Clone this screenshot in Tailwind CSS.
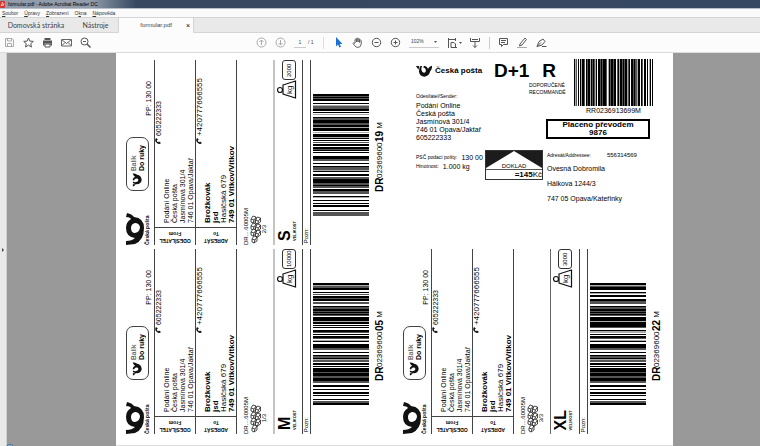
<!DOCTYPE html>
<html lang="cs">
<head>
    <meta charset="UTF-8">
    <meta name="viewport" content="width=device-width, initial-scale=1.0">
    <title>formular.pdf - Adobe Acrobat Reader DC</title>
    <script src="https://cdn.jsdelivr.net/npm/@tailwindcss/browser@4"></script>
</head>
<body class="bg-[#999999] text-black min-h-screen flex flex-col font-['Liberation_Sans',Arial,sans-serif]">

    <!-- shared symbols -->
    <svg class="hidden">
        <symbol id="horn" viewBox="0 0 44 33">
            <path d="M0 3 L9 3 Q7 8 8 13 Q3 10 0 3Z" fill="#111"/>
            <path fill-rule="evenodd" d="M12 3 L17 3 Q14 8 15 14 Q17 22 23 21 Q28 20 27 13 Q26 8 20 7 L22 2 Q31 3 33 10 Q37 4 44 2 Q45 11 39 17 Q37 30 23 32 Q10 31 8 18 Q8 9 12 3Z" fill="#111"/>
        </symbol>
        <symbol id="horn-up" viewBox="0 0 18 32">
            <path fill-rule="evenodd" d="M1 0 Q6 1 8 4 Q18 5 18 15 Q18 27 9 31 L0 32 V28 Q6 28 9 25 Q0 24 0 15 Q0 9 5 6 Q4 4 0 4Z M5 15 Q5 20 9 20 Q14 19 14 14 Q13 10 9 10 Q5 11 5 15Z" fill="#111"/>
        </symbol>
        <symbol id="phone" viewBox="0 0 6 6">
            <path d="M1 0 Q-1 3 2 5 Q4 7 6 5 L4 3.500 L3.200 4.300 Q1.500 3.500 2 2 L3 1.500Z" fill="#111"/>
        </symbol>
        <symbol id="boxes" viewBox="0 0 11 29">
            <g fill="#fff" stroke="#222" stroke-width=".8">
                <path id="cube" d="M1 4 L3 1 L6 2 L6 6 L3 8 L1 7Z M1 4 L4 5 L6 2 M4 5 L3 8"/>
                <use href="#cube" x="4.500" y="1"/>
                <use href="#cube" y="7"/>
                <use href="#cube" x="4.500" y="8"/>
                <use href="#cube" y="13"/>
                <use href="#cube" x="4.500" y="14"/>
                <use href="#cube" x="1" y="20"/>
            </g>
        </symbol>
    </svg>

    <header>
        <div class="h-2 flex items-center gap-[3px] overflow-hidden bg-linear-to-r from-[#929cab] from-12% via-[#35485f] via-18% to-[#354961]">
            <svg class="w-[5px] h-[7px]" viewBox="0 0 5 7"><rect width="5" height="7" rx="1" fill="#d8352c"/><path d="M1 5 L2.500 1.500 L4 4 L1 4.500" fill="none" stroke="#fff" stroke-width=".7"/></svg>
            <h1 class="text-[5px] leading-[7px] whitespace-nowrap">formular.pdf - Adobe Acrobat Reader DC</h1>
        </div>
        <nav class="h-[10px] px-[2px] flex items-center gap-[6px] bg-[#fafafa] border-t border-b border-t-[#b8c0c9] border-b-[#d5d5d5] text-[5px] leading-[7px] text-[#333]">
            <a href="#"><u>S</u>oubor</a>
            <a href="#"><u>Ú</u>pravy</a>
            <a href="#"><u>Z</u>obrazení</a>
            <a href="#">O<u>k</u>na</a>
            <a href="#"><u>N</u>ápověda</a>
        </nav>
        <div class="h-[15px] flex bg-[#e9e9e9] border-b border-[#d5d5d5] text-[7px] leading-[15px] text-[#444] font-['Lato',sans-serif]">
            <button class="w-[72px]">Domovská stránka</button>
            <button class="w-[46px] pl-[1px]">Nástroje</button>
            <div class="w-[76px] h-[15px] flex justify-end gap-[14px] pr-[3px] bg-[#fcfcfc] border-l border-r border-[#d5d5d5] font-['Liberation_Sans',Arial,sans-serif] text-[6px]">
                <span>formular.pdf</span>
                <button aria-label="Zavřít" class="text-[7px] text-black">×</button>
            </div>
        </div>
        <div class="h-5 flex items-center bg-[#fcfcfc] border-b border-[#dcdcdc] text-[5px] text-[#444]">
            <div class="flex items-center gap-2 pl-1">
                <button aria-label="Uložit"><svg class="size-[11px]" viewBox="0 0 11 11" fill="none" stroke="#aaa"><path d="M1.500 1.500H8L9.500 3V9.500H1.500Z M3.500 1.500V4H7.500V1.500 M3.500 9.500V6.500H7.500V9.500"/></svg></button>
                <button aria-label="Oblíbené"><svg class="size-[11px]" viewBox="0 0 11 11" fill="none" stroke="#555"><path d="M5.500 1 L6.900 4.100 L10.300 4.400 L7.700 6.700 L8.500 10 L5.500 8.200 L2.500 10 L3.300 6.700 L.700 4.400 L4.100 4.100Z"/></svg></button>
                <button aria-label="Tisk"><svg class="size-[11px]" viewBox="0 0 11 11"><path d="M2.500 1H8.500V3H2.500Z M1 3.500H10V8.500H8.500V6.500H2.500V8.500H1Z" fill="#555"/><path d="M3 7V10H8V7Z" fill="#fff" stroke="#555"/></svg></button>
                <button aria-label="E-mail"><svg class="size-[11px]" viewBox="0 0 11 11" fill="none" stroke="#666"><path d="M.500 2.500H10.500V9H.500Z M1 3L5.500 6.500L10 3 M1 8.500L4 5.500 M10 8.500L7 5.500"/></svg></button>
                <button aria-label="Najít"><svg class="size-[11px]" viewBox="0 0 11 11" fill="none" stroke="#555"><circle cx="4.500" cy="4.500" r="3.500"/><path d="M7 7L10.500 10.500" stroke-width="1.500"/><path d="M3 4.500H6"/></svg></button>
            </div>
            <div class="flex items-center ml-[165px]">
                <div class="w-[67px] flex items-center gap-2">
                    <button aria-label="Předchozí"><svg class="size-[11px]" viewBox="0 0 11 11" fill="none" stroke="#aaa"><circle cx="5.500" cy="5.500" r="4.500"/><path d="M5.500 8V3 M3.500 5L5.500 3L7.500 5"/></svg></button>
                    <button aria-label="Další"><svg class="size-[11px]" viewBox="0 0 11 11" fill="none" stroke="#aaa"><circle cx="5.500" cy="5.500" r="4.500"/><path d="M5.500 3V8 M3.500 6L5.500 8L7.500 6"/></svg></button>
                    <label class="flex items-center gap-[2px]"><input aria-label="Strana" value="1" class="w-3 h-[11px] text-center border-b border-[#ccc]"><span class="whitespace-nowrap">/ 1</span></label>
                </div>
                <div class="w-[166px] h-3 pl-[9px] flex items-center gap-2 border-l border-[#ddd]">
                    <button aria-label="Výběr"><svg class="size-[11px]" viewBox="0 0 11 11"><path d="M3 0V9.500L5 7.500L6.500 10.500L8 9.800L6.600 7H9.500Z" fill="#1a6fd0"/></svg></button>
                    <button aria-label="Ruka"><svg class="size-[11px]" viewBox="0 0 11 11" fill="none" stroke="#555" stroke-width=".9"><path d="M3 6V2.500Q3.700 1.500 4.400 2.500V5V1.500Q5.200 .500 6 1.500V5V2Q6.800 1.200 7.600 2V5.500V3.500Q8.500 2.500 9.200 3.500V7Q9 10.300 6 10.400Q4 10.400 3 9L1 6.500Q1 5 3 6.500"/></svg></button>
                    <button aria-label="Zmenšit"><svg class="size-[11px]" viewBox="0 0 11 11" fill="none" stroke="#555"><circle cx="5.500" cy="5.500" r="4.200"/><path d="M3.500 5.500H7.500"/></svg></button>
                    <button aria-label="Zvětšit"><svg class="size-[11px]" viewBox="0 0 11 11" fill="none" stroke="#555"><circle cx="5.500" cy="5.500" r="4.200"/><path d="M3.500 5.500H7.500M5.500 3.500V7.500"/></svg></button>
                    <div class="w-[30px] h-[11px] flex items-center justify-between px-[2px] border-b border-[#ccc]">
                        <select aria-label="Lupa" class="appearance-none w-5"><option>102%</option></select>
                        <svg class="w-[3px] h-[2px]" viewBox="0 0 3 2"><path d="M0 0H3L1.500 2Z" fill="#555"/></svg>
                    </div>
                    <button aria-label="Přizpůsobit" class="flex items-center gap-[2px]"><svg class="size-[10px]" viewBox="0 0 10 10" fill="none" stroke="#555"><path d="M1.500 0V10 M1.500 1.500H8 M8.500 0V3 M4 9.500V4.500H7L8.500 6V9.500 M4 9.500H10"/></svg><svg class="w-[3px] h-[2px]" viewBox="0 0 3 2"><path d="M0 0H3L1.500 2Z" fill="#555"/></svg></button>
                    <button aria-label="Posun"><svg class="size-[10px]" viewBox="0 0 10 10" fill="none" stroke="#555"><path d="M.500 0V3.500H9.500V0 M2 1.500H8 M5 4V9.500 M3 7.500L5 9.500L7 7.500"/></svg></button>
                </div>
                <div class="h-3 pl-2 flex items-center gap-2 border-l border-[#ccc]">
                    <button aria-label="Komentář"><svg class="size-[11px]" viewBox="0 0 11 11" fill="none" stroke="#555"><path d="M1.500 1.500H9.500V7.500H5.500L3.500 9.500V7.500H1.500Z M3 3.500H8 M3 5.500H7"/></svg></button>
                    <button aria-label="Zvýraznit"><svg class="size-[11px]" viewBox="0 0 11 11" fill="none" stroke="#555"><path d="M3 7L8 1L9.500 2.500L5 8L2.500 9Z"/><path d="M0 10.500H10" stroke="#aaa"/></svg></button>
                    <button aria-label="Podepsat"><svg class="size-[11px]" viewBox="0 0 11 11" fill="none" stroke="#555"><path d="M1 9.500L3 4.500L7 2L9 4.500L6 8Z M1 9.500L5 5.500 M6 9.500H10.500"/></svg></button>
                </div>
            </div>
        </div>
    </header>

    <div class="flex-1 flex relative overflow-hidden">
        <aside class="w-[7px] bg-[#e9e9e9] border-r border-[#d0d0d0] flex items-center">
            <button aria-label="Panel" class="ml-[2px]"><svg class="w-[2px] h-1" viewBox="0 0 2 4"><path d="M0 0L2 2L0 4Z" fill="#444"/></svg></button>
        </aside>
        <div class="absolute left-[5px] -bottom-[8px] size-[10px] rounded-full bg-[#8fb4d6] border border-[#4a6f94]"></div>

        <main class="flex-1 flex justify-center pl-[22px]">
            <article class="w-[557px] shrink-0 bg-white pt-[7px] pb-[11px] pl-[10px] border-b border-[#ddd] grid grid-cols-[277px_1fr] gap-y-1 content-start">
                <section id="label1" class="h-[185px] flex"></section>

                <section class="pl-[13px] pr-5 flex text-[7px] leading-[8px]">
                    <div class="w-[69px] pt-[5px] shrink-0">
                        <div class="flex items-center gap-[3px] mb-[15px] whitespace-nowrap">
                            <svg class="w-4 h-3"><use href="#horn"/></svg>
                            <b class="text-[8px] leading-3">Česká pošta</b>
                        </div>
                        <p class="text-[5px] leading-[8px] mb-[2px]">Odesílatel/Sender:</p>
                        <p class="whitespace-nowrap">Podání Online<br>Česká pošta<br>Jasmínová 301/4<br>746 01 Opava/Jaktař<br>605222333</p>
                        <dl class="mt-[11px] leading-[9px] whitespace-nowrap">
                            <div class="flex gap-1"><dt class="text-[5px]">PSČ podací pošty:</dt><dd>130 00</dd></div>
                            <div class="flex gap-1"><dt class="text-[5px]">Hmotnost:</dt><dd>1.000 kg</dd></div>
                        </dl>
                    </div>
                    <div class="w-[61px] shrink-0 flex flex-col">
                        <div class="flex justify-between pl-[9px] text-[19px] leading-[22px] font-bold whitespace-nowrap w-[71px]"><span>D+1</span><span>R</span></div>
                        <p class="pl-11 text-[5px] leading-[7px]">DOPORUČENÉ<br>RECOMMANDÉ</p>
                        <div class="mt-[54px] w-[58px] h-[30px] border border-[#333] flex flex-col">
                            <svg class="w-full h-[19px]" viewBox="0 0 56 19" role="img">
                                <path d="M0 0H56V17L28 0L0 17Z" fill="#1c1c1c"/>
                                <path d="M0 18.500H56" stroke="#555"/>
                                <text x="28" y="17" font-size="6" text-anchor="middle">DOKLAD</text>
                            </svg>
                            <p class="text-right text-[8px] leading-[9px]"><b>=145</b>Kč</p>
                        </div>
                    </div>
                    <div class="flex-1">
                        <div class="pl-[28px] -mt-[1px]">
                            <svg id="rrCode" class="w-[79px] h-[47px]" viewBox="0 0 79 10" preserveAspectRatio="none" shape-rendering="crispEdges"></svg>
                            <p class="text-center leading-[9px] w-[79px]">RR0236913699M</p>
                        </div>
                        <p class="mt-1 h-5 w-[104px] border-2 border-black text-center text-[8px] leading-[8px] font-bold">Placeno převodem<br>9876</p>
                        <div class="pl-[1px] mt-3">
                            <p class="flex gap-4 text-[6px] leading-[8px]"><span class="text-[5px]">Adresát/Addressee:</span>556314569</p>
                            <p class="mt-[2px] leading-[15px]">Ovesná Dobromila<br>Hálkova 1244/3<br>747 05 Opava/Kateřinky</p>
                        </div>
                    </div>
                </section>

                <section id="label2" class="h-[185px] flex"></section>
                <section id="label3" class="h-[185px] flex"></section>
            </article>
        </main>
    </div>

    <script>
        // one character per pixel: # black, + dark grey, - light grey, space white
        const shades = { "#": "#000", "+": "#555", "-": "#aaa" };
        const codes = {
            a: "##+#+##  #" + " -+++## # " + "-  #++###+" + "+##-### - " + "###-# # + " + "## ##+# # " +
               "  ###++  #" + "  #+++-#  " + "## ++####+" + "+#++ ##+++" + "  #-  #  #" + " ##   # ++" + "++",
            b: "##-++##  #" + " + ##+## +" + "+  #++##+#" + "+#+ ####-#" + "# # #  ##+" + " # ##+ -# " +
               " ####++  #" + "  #++#-++ " + "## # ####+" + "###++###++" + "  ##  #  #" + "# #   # ++" + "##",
            c: "##-+###  #" + "- ##  ##++" + "+  #++##+#" + "+#+ ####-#" + "####+  #--" + " # ##+ -# " +
               " ####++  #" + "  #++#-++ " + "## # ####+" + "###++###++" + "  ##  #  #" + "# #   # ++" + "##",
            rr: "#-+ # #-##" + "+ #+##-#+#" + "+-# ##+#+#" + "##+ -#+##+" + "## +#-##+#" + "+##-+# ##+" + "#++-## #+ " + "## # -# #"
        };

        function bars(code, vertical) {
            return [...codes[code]].map((c, i) => c === " " ? "" : vertical
                ? `<rect x="0" y="${i}" width="10" height="1" fill="${shades[c]}"/>`
                : `<rect x="${i}" y="0" width="1" height="10" fill="${shades[c]}"/>`).join("");
        }

        function party(phone, lines, phoneClass, linesClass, title, sub) {
            return `
                <div class="w-[41px] border-l border-[#444] flex flex-col">
                    <div class="h-[168px] flex items-end border-b border-[#444]">
                        <div class="w-2 mb-[83px] flex flex-col gap-[2px]">
                            <span class="${phoneClass}">${phone}</span>
                            <svg class="size-[6px]"><use href="#phone"/></svg>
                        </div>
                        <p class="${linesClass}">${lines}</p>
                    </div>
                    <p class="rotate-180 h-[17px] pt-[1px] text-center text-[5px] leading-[7px] font-bold">${title}<br>${sub}</p>
                </div>`;
        }

        function showLabel(id, o) {
            document.getElementById(id).innerHTML = `
                <div class="w-7 pt-[21px] flex flex-col justify-between">
                    <p class="[writing-mode:vertical-rl] rotate-180 self-end mr-[1px] text-[7px] leading-[8px]">PP: 130 00</p>
                    <div class="w-[23px] h-[54px] border border-[#444] rounded-[7px] flex flex-col items-center justify-end gap-[2px] pb-[3px]">
                        <p class="[writing-mode:vertical-rl] rotate-180 text-[7px] leading-[8px] text-[#333]">Balík<br><b class="text-black">Do ruky</b></p>
                        <svg class="w-[10px] h-[14px] mr-[2px]" viewBox="0 0 33 44"><use href="#horn" width="44" height="33" transform="translate(0 44) rotate(-90)"/></svg>
                    </div>
                    <div class="flex">
                        <svg class="w-[18px] h-8"><use href="#horn-up"/></svg>
                        <b class="[writing-mode:vertical-rl] rotate-180 text-[5px] leading-[7px]">Česká pošta</b>
                    </div>
                </div>
                ${party("605222333", "Podání Online<br>Česká pošta<br>Jasmínová 301/4<br>746 01 Opava/Jaktař",
                    "[writing-mode:vertical-rl] rotate-180 text-[7px] leading-[8px]",
                    "[writing-mode:vertical-rl] rotate-180 mb-1 text-[7px] leading-[8px] whitespace-nowrap",
                    "ODESÍLATEL", "From")}
                ${party("+420777666555", "<b>Brožkovák</b><br><b>jsd</b><br>Hasičská 679<br><b>749 01 Vítkov/Vítkov</b>",
                    "[writing-mode:vertical-rl] rotate-180 text-[8px] leading-[8px]",
                    "[writing-mode:vertical-rl] rotate-180 mb-1 text-[8px] leading-[8px] whitespace-nowrap",
                    "ADRESÁT", "To")}
                <div class="w-[37px] border-l border-[#444] pl-[6px] flex items-end text-[6px] leading-[7px]">
                    <p class="[writing-mode:vertical-rl] rotate-180">DR....60005M</p>
                    <svg class="w-[11px] h-[29px] mb-[1px]"><use href="#boxes"/></svg>
                    <p class="[writing-mode:vertical-rl] rotate-180 mb-3">${o.part}</p>
                </div>
                <div class="w-[29px] ${o.edge} pl-[2px] flex flex-col justify-between">
                    <div>
                        <p class="[writing-mode:vertical-rl] rotate-180 ml-[5px] w-[14px] h-5 border border-[#333] rounded-[3px] text-center text-[6px] leading-[12px]">${o.weight}</p>
                        <svg class="w-5 h-[19px]" viewBox="0 0 20 19" fill="none" stroke="#111" stroke-width="1.200">
                            <circle cx="3" cy="10" r="2.500"/>
                            <path d="M6 5L18.500 1V18L6 14Z"/>
                            <text transform="translate(15 14) rotate(-90)" font-size="8" fill="#111" stroke="none">kg</text>
                        </svg>
                    </div>
                    <p class="[writing-mode:vertical-rl] rotate-180 mb-1 font-bold text-[16px] leading-[15px] w-5">${o.size}<br><span class="block text-[4px] leading-[5px]">VELIKOST</span></p>
                </div>
                <div class="w-2 border-l border-[#444] flex items-end pb-[2px]">
                    <p class="[writing-mode:vertical-rl] rotate-180 text-[6px] leading-[7px]">Pozn:</p>
                </div>
                <div class="border-l border-[#444] pl-[2px] pt-[34px]">
                    <div class="flex items-center gap-[5px]">
                        <svg class="w-14 h-[122px]" viewBox="0 0 10 122" preserveAspectRatio="none" shape-rendering="crispEdges">${bars(o.code, true)}</svg>
                        <p class="[writing-mode:vertical-rl] rotate-180 mt-1 text-[8px] leading-3 whitespace-nowrap"><b class="text-[10px]">DR</b><span class="my-[1px]">02369600</span><b class="text-[10px]">${o.number}</b> M</p>
                    </div>
                </div>`;
        }

        showLabel("label1", { part: "2/3", weight: "2000", size: "S", number: "19", code: "a", edge: "border-l-2 border-[#c4c4c4]" });
        showLabel("label2", { part: "1/3", weight: "10000", size: "M", number: "05", code: "b", edge: "border-l-2 border-[#c4c4c4]" });
        showLabel("label3", { part: "3/3", weight: "3000", size: "XL", number: "22", code: "c", edge: "border-l border-[#666]" });
        document.getElementById("rrCode").innerHTML = bars("rr", false);
    </script>

</body>
</html>
